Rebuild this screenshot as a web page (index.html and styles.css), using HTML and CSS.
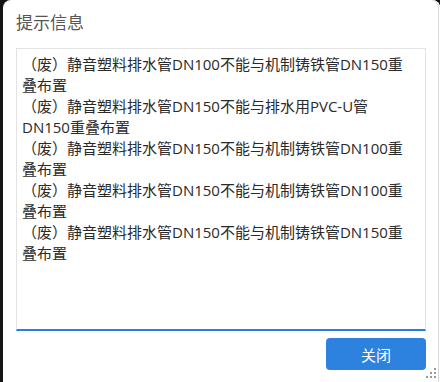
FILE: index.html
```html
<!DOCTYPE html>
<html lang="zh-CN">
<head>
<meta charset="utf-8">
<title>提示信息</title>
<link rel="stylesheet" href="styles.css">
</head>
<body>
<div class="dialog">
  <div class="title">提示信息</div>
  <div class="message-box">
    <div class="message-text">（废）静音塑料排水管DN100不能与机制铸铁管DN150重叠布置
（废）静音塑料排水管DN150不能与排水用PVC-U管DN150重叠布置
（废）静音塑料排水管DN150不能与机制铸铁管DN100重叠布置
（废）静音塑料排水管DN150不能与机制铸铁管DN100重叠布置
（废）静音塑料排水管DN150不能与机制铸铁管DN150重叠布置</div>
  </div>
  <div class="footer">
    <button class="btn-close" type="button">关闭</button>
  </div>
  <svg class="grip" width="12" height="12" viewBox="0 0 12 12">
    <rect x="8" y="0" width="2" height="2" fill="#9a9a9a"/>
    <rect x="4" y="4" width="2" height="2" fill="#9a9a9a"/>
    <rect x="8" y="4" width="2" height="2" fill="#9a9a9a"/>
    <rect x="0" y="8" width="2" height="2" fill="#9a9a9a"/>
    <rect x="4" y="8" width="2" height="2" fill="#9a9a9a"/>
    <rect x="8" y="8" width="2" height="2" fill="#9a9a9a"/>
  </svg>
</div>
</body>
</html>
```
FILE: styles.css
```css
html, body {
  margin: 0;
  padding: 0;
}
body {
  width: 440px;
  height: 382px;
  overflow: hidden;
  background: #141414;
  font-family: "Noto Sans CJK SC", "Noto Sans", sans-serif;
}
.dialog {
  position: relative;
  margin-left: 3px;
  width: 437px;
  height: 382px;
  box-sizing: border-box;
  background: #fff;
  border-radius: 8px 8px 0 0;
  box-shadow: inset -1px 0 0 #fff, inset -2px 0 0 #d8d8d8;
  padding: 10px 0 0 13px;
}
.title {
  font-size: 17px;
  line-height: 24px;
  color: #555;
  height: 24px;
}
.message-box {
  margin-top: 14px;
  width: 410px;
  height: 283px;
  box-sizing: border-box;
  border: 1px solid #e3e3e3;
  border-bottom: 2px solid #2b7fdc;
  padding: 5px 0 0 5px;
}
.message-text {
  width: 388px;
  white-space: pre-wrap;
  font-family: "Open Sans", "Noto Sans CJK SC", sans-serif;
  font-size: 15px;
  line-height: 21px;
  color: #2a2a2a;
}
.footer {
  width: 410px;
  display: flex;
  justify-content: flex-end;
  margin-top: 7px;
}
.btn-close {
  width: 100px;
  height: 32px;
  border: none;
  border-radius: 4px;
  background: #2d82e0;
  color: #fff;
  font-family: "Noto Sans CJK SC", sans-serif;
  font-size: 15px;
  padding: 0;
}
.grip {
  position: absolute;
  right: 2px;
  bottom: 2px;
}
```
